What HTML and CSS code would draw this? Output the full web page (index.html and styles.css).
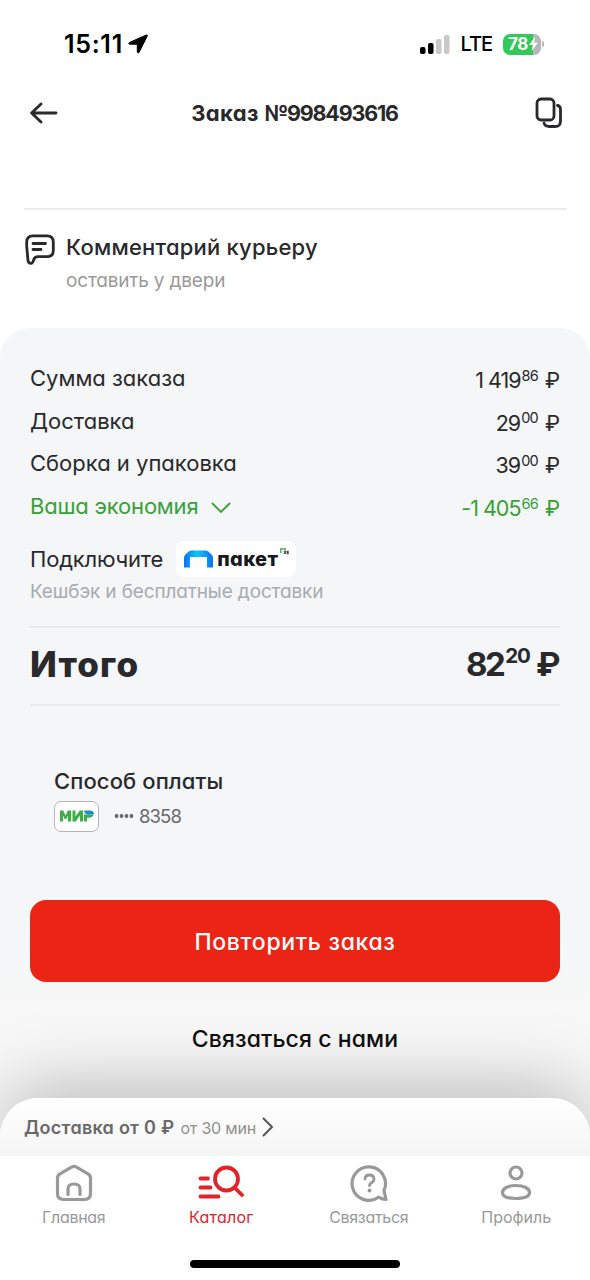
FILE: index.html
```html
<!DOCTYPE html>
<html lang="ru">
<head>
<meta charset="utf-8">
<title>Заказ №998493616</title>
<link rel="stylesheet" href="styles.css">
</head>
<body>
<div class="screen">
  <div class="status">
    <span class="clock">15:11</span>
    <svg class="locate" width="20" height="20" viewBox="0 0 20 20"><path d="M18.3 1 1.600 8.400c-1.200.6-1 1.800.3 1.800h7.400v7.600c0 1.300 1.300 1.500 1.900.3L19.300 1.900c.3-.7-.3-1.200-1-.9z" stroke="#000"/></svg>
    <svg class="signal" width="30" height="19" viewBox="0 0 30 19"><rect x="0" y="12" width="5.500" height="7" rx="1.800"/><rect x="8" y="8" width="5.500" height="11" rx="1.800"/><g fill="#c9c9c9"><rect x="16" y="4" width="5.500" height="15" rx="1.800"/><rect x="24" y="0" width="5.500" height="19" rx="1.800"/></g></svg>
    <span class="network">LTE</span>
    <div class="battery"><span>78</span><svg width="9" height="14" viewBox="0 0 9 14"><path d="M6 0 0 8h3.800L2.600 14 9 5.700H5.200z" fill="#fff"/></svg></div>
    <i class="battery-tip"></i>
  </div>

  <header class="header">
    <svg width="28" height="22" viewBox="0 0 28 22" class="line"><path d="M11 2 1.600 11l9.400 9M2 11h24"/></svg>
    <h1>Заказ <span>№998493616</span></h1>
    <svg width="28" height="32" viewBox="0 0 28 32" class="line"><rect x="2" y="2" width="17" height="21" rx="4"/><path d="M22.500 8.500c2.700.4 3 1.800 3 4v11.500c0 4-1.500 5.500-5.500 5.500h-5.500c-3 0-4.800-.6-5.500-3.500"/></svg>
  </header>

  <section class="comment">
    <svg width="30" height="31" viewBox="0 0 30 31" class="line"><path d="M8 1.800h14q6.300 0 6.300 6.200v8.500q0 6.200-6.300 6.200H13q-3.300 0-4.300 3-.8 3.600-2.900 3.600-2.600 0-2.900-3.500L1.700 12V8q0-6.200 6.300-6.200z"/><path d="M8 9.500h12.500M8 15.500h8"/></svg>
    <div>
      <h2>Комментарий курьеру</h2>
      <p>оставить у двери</p>
    </div>
  </section>

  <main class="panel">
    <div class="row"><span>Сумма заказа</span><span class="sum">1 419<sup>86</sup> ₽</span></div>
    <div class="row"><span>Доставка</span><span class="sum">29<sup>00</sup> ₽</span></div>
    <div class="row"><span>Сборка и упаковка</span><span class="sum">39<sup>00</sup> ₽</span></div>
    <div class="row saving"><span class="saving-label">Ваша экономия <svg width="20" height="12" viewBox="0 0 20 12"><path d="M1.500 1.500 10 10l8.500-8.500"/></svg></span><span class="sum">-1 405<sup>66</sup> ₽</span></div>
    <div class="promo">
      <span class="promo-label">Подключите</span>
      <div class="paket">
        <svg width="29" height="18" viewBox="0 0 29 18"><defs><linearGradient id="g" x1="0" x2="1"><stop offset="0" stop-color="#0a72f5"/><stop offset=".45" stop-color="#12c4f7"/><stop offset="1" stop-color="#0872fa"/></linearGradient></defs><path d="M0 17.500V8Q0 6 1.200 4.800L5 1.200Q6 .5 7.500.5h14Q23 .5 24 1.200l3.800 3.600Q29 6 29 8v9.500h-6V7H6v10.500z" fill="url(#g)"/></svg>
        <b>пакет</b>
        <svg class="x5" width="9" height="7" viewBox="0 0 9 7"><path d="M.8 5V.8h4.500v2" fill="none" stroke="#439f40" stroke-width="1.300"/><path d="m4 3 2 3M6 3 4 6M8.800 3.300H7v1.200h1.300v1.400H6.700" fill="none" stroke="#222" stroke-width=".9"/></svg>
      </div>
    </div>
    <p class="cashback">Кешбэк и бесплатные доставки</p>
    <div class="total"><span class="total-label">Итого</span><span class="total-sum">82<sup>20</sup> ₽</span></div>
    <section class="payment">
      <h3>Способ оплаты</h3>
      <div class="card-line">
        <div class="mir"><svg width="34" height="12" viewBox="0 0 34 12"><path d="M0 11.500V.5h3.200l2.300 5 2.300-5H11v11H8V5.500L6.300 9H4.700L3 5.500v6zM12.500 11.500V.5h3v6l4.200-6H23v11h-3v-6l-4.200 6zM24 11.500V4.500h9.500c-.7 2.100-2.200 3.300-4.500 3.300h-2v3.700z" fill="#3fae49"/><path d="M24 .5h6c2.800 0 4.200 1.700 3.800 4H28c-2.200 0-3.700-1.400-4-4z" fill="#1390cf"/></svg></div>
        <i class="dots"></i>
        <span class="digits">8358</span>
      </div>
    </section>
    <button class="repeat">Повторить заказ</button>
    <a class="contact">Связаться с нами</a>
  </main>

  <div class="sheet">
    <b>Доставка от 0 ₽</b><span>от 30 мин</span>
    <svg width="12" height="20" viewBox="0 0 12 20"><path d="m1.500 1.500 8.500 8.500-8.500 8.500"/></svg>
  </div>

  <nav class="tabs">
    <a class="tab narrow"><svg width="38" height="38" viewBox="0 0 38 38"><path d="M16.500 3.200 5 9.800Q2.500 11.300 2.500 14v15.500q0 6 6 6h21q6 0 6-6V14q0-2.700-2.500-4.200L21.500 3.200Q19 1.500 16.500 3.200zM13 30.500V25q0-5 6-5t6 5v5.500"/></svg><span>Главная</span></a>
    <a class="tab active"><svg width="46" height="38" viewBox="0 0 46 38"><circle cx="28.500" cy="15" r="11.500"/><path d="m36.500 23.500 7.500 7.500M2.500 14.500H10M2.500 23.500h10M2.500 32.500h18"/></svg><span>Каталог</span></a>
    <a class="tab narrow"><svg width="38" height="38" viewBox="0 0 38 38"><path d="M34 26.500Q35 31 36 35.500q-3.500 0-7.500-2.300A16.700 16.700 0 1 1 34 26.500z"/><path d="M15 15q.2-4 4.500-4t4.500 4q0 2.300-2.500 3.700-2 1.100-2 3" stroke-width="2.800"/><circle cx="19.500" cy="26.500" r="2" fill="currentColor" stroke="none"/></svg><span>Связаться</span></a>
    <a class="tab"><svg width="38" height="38" viewBox="0 0 38 38"><circle cx="19" cy="9" r="6"/><path d="M19 21.500c8 0 13.500 3 13.500 7S28 34.500 19 34.500 5.500 32.500 5.500 28.500s5.500-7 13.500-7z"/></svg><span>Профиль</span></a>
  </nav>
  <div class="home"></div>
</div>
</body>
</html>
```
FILE: styles.css
```css
* { box-sizing: border-box; margin: 0; padding: 0; }
body { background: #fff; }
.screen {
  width: 590px; height: 1280px; overflow: hidden;
  display: flex; flex-direction: column;
  font-family: Inter, "Noto Sans", sans-serif;
  font-feature-settings: "cv11";
  color: #29282b; background: #fff; white-space: nowrap;
}
.screen svg { flex: none; }
.line { fill: none; stroke: #29282b; stroke-width: 2.800; stroke-linecap: round; stroke-linejoin: round; }

.status { height: 85px; padding: 3px 45px 0 64px; display: flex; align-items: center; color: #000; flex: none; }
.clock { font-size: 25px; font-weight: 600; letter-spacing: .7px; }
.locate { margin-left: 5px; }
.signal { margin-left: auto; }
.network { margin: 0 11px 0 10px; font-size: 20px; font-weight: 500; letter-spacing: -1px; }
.battery {
  width: 38px; height: 21px; border-radius: 7px; display: flex; align-items: center; gap: 1px; padding-left: 5px;
  background: linear-gradient(90deg, #34c759 78%, #b5b8b5 78%);
  color: #fff; font-size: 17px; font-weight: 700; letter-spacing: -.5px;
}
.battery-tip { width: 2px; height: 6px; margin: 0 1px; border-radius: 0 2px 2px 0; background: #b5b8b5; }

.header { height: 125px; padding: 12px 27px 0 30px; display: flex; justify-content: space-between; align-items: flex-start; flex: none; }
.header svg:first-child { margin-top: 5px; }
.header h1 { margin-right: 4px; font-size: 22px; line-height: 33px; font-weight: 700; letter-spacing: .4px; }
.header h1 span { font-size: 21.500px; letter-spacing: -1.200px; }

.comment { height: 118px; margin: -2px 23px 0 24px; padding: 24px 0 0 1px; border-top: 2px solid #ececec; display: flex; gap: 11px; flex: none; }
.comment h2 { margin-top: -1px; font-size: 22px; line-height: 28px; font-weight: 500; letter-spacing: .22px; }
.comment p { margin-top: 7px; font-size: 19px; line-height: 25px; letter-spacing: -.18px; color: #999; }

.panel {
  height: 830px; flex: none; padding: 30px 30px 0; margin-top: 2px;
  border-radius: 30px 30px 0 0; display: flex; flex-direction: column;
  background: linear-gradient(#f4f6f8 0, #f4f6f8 600px, #f8f8f8 680px);
}
.row { height: 42.700px; flex: none; display: flex; justify-content: space-between; align-items: flex-start; font-size: 22px; line-height: 40px; }
.sum { padding-top: 2px; margin-right: 1px; font-size: 21.500px; letter-spacing: -1px; }
sup { font-size: 14.500px; line-height: 0; vertical-align: 7.500px; }
.sum sup { margin: 0 2px 0 1px; letter-spacing: -.8px; }
.saving { color: #39a035; }
.saving-label { letter-spacing: -.2px; }
.saving svg { margin-left: 7px; fill: none; stroke: currentColor; stroke-width: 1.800; stroke-linecap: round; }
.promo { height: 36px; margin-top: 12px; display: flex; align-items: center; gap: 13px; font-size: 22px; flex: none; }
.promo-label { letter-spacing: -.2px; }
.paket { width: 120px; height: 36px; border-radius: 8px; background: #fff; padding: 0 5px 0 8px; display: flex; align-items: center; }
.paket b { margin-left: 4px; font-size: 20px; font-weight: 800; letter-spacing: .4px; color: #18191d; }
.paket .x5 { margin: -14px 0 0 2px; }
.cashback { margin-top: 2px; font-size: 19px; line-height: 25px; letter-spacing: -.14px; color: #a8abaf; }
.total {
  height: 80px; margin-top: 22px; flex: none; display: flex; justify-content: space-between; padding-top: 15px;
  border-top: 2px solid #e9eaec; border-bottom: 2px solid #e9eaec; font-size: 34px; line-height: 42px; font-weight: 700;
}
.total-label { font-size: 35px; font-weight: 800; letter-spacing: 1.200px; }
.total-sum { margin-right: 2px; font-size: 33px; letter-spacing: -2.500px; }
.total sup { margin: 0 1px 0 2px; font-size: 20.500px; vertical-align: 12.500px; letter-spacing: -1.200px; }
.payment { margin: 61px 0 0 24px; }
.payment h3 { font-size: 22px; line-height: 28px; font-weight: 500; letter-spacing: .1px; }
.card-line { margin-top: 6px; display: flex; align-items: center; font-size: 18.500px; color: #68696c; }
.mir { width: 45px; height: 31px; border: 1px solid #b8b3b7; border-radius: 7px; background: #fff; display: grid; place-items: center; }
.dots { width: 20px; height: 4px; margin: 0 5px 0 15px; background: radial-gradient(circle, #68696c 1.600px, transparent 2.200px) 0 0 / 5px 4px; }
.digits { letter-spacing: -.9px; }
.repeat {
  height: 82px; margin-top: 68px; padding-top: 2px; flex: none; border: 0; border-radius: 16px; background: #ec2416; color: #fff;
  font: inherit; font-feature-settings: inherit; font-size: 23px; font-weight: 500; letter-spacing: .68px;
}
.contact { margin-top: 42px; text-align: center; font-size: 23px; line-height: 31px; font-weight: 500; letter-spacing: .1px; color: #0d0d0d; }

.sheet {
  height: 58px; flex: none; position: relative; margin-top: -60px; padding: 0 24px; display: flex; align-items: center;
  border-radius: 38px 38px 0 0; background: linear-gradient(#fff, #f5f5f5); box-shadow: 0 0 80px rgba(0, 0, 0, .36);
  color: #686868;
}
.sheet b { font-size: 18px; font-weight: 600; letter-spacing: .27px; }
.sheet span { margin: 2px 6px 0 6px; font-size: 16px; letter-spacing: -.2px; color: #8f8f8f; }
.sheet svg { fill: none; stroke: #555; stroke-width: 2; stroke-linecap: round; stroke-linejoin: round; }

.tabs { height: 104px; flex: none; position: relative; background: #fff; display: grid; grid-template-columns: repeat(4, 147.500px); padding-top: 8px; }
.tab { display: flex; flex-direction: column; align-items: center; gap: 5px; font-size: 16px; line-height: 20px; color: #999; }
.tab svg { fill: none; stroke: currentColor; stroke-width: 3.200; stroke-linecap: round; stroke-linejoin: round; }
.tab.narrow { letter-spacing: -.3px; }
.tab.active { color: #e2212b; letter-spacing: .25px; }
.tab.active svg { stroke-width: 3.800; }
.home { width: 210px; height: 8px; margin: 0 auto; border-radius: 4px; background: #000; position: relative; flex: none; }
```
